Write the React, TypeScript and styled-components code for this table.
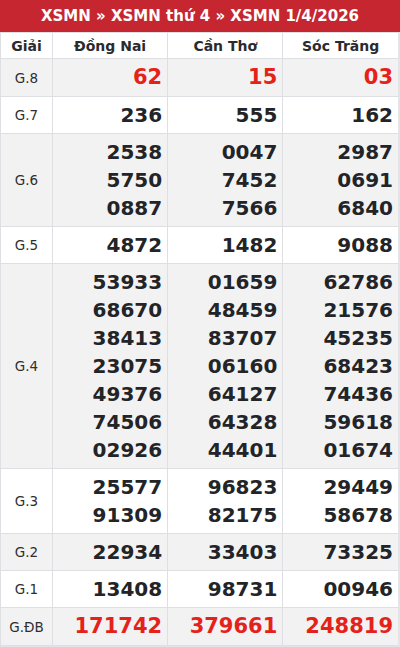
import { ReactElement } from 'react';
import styled, { createGlobalStyle } from 'styled-components';

const GlobalStyle = createGlobalStyle`
  html, body {
    margin: 0;
    padding: 0;
    background: #fff;
    font-family: 'DejaVu Sans', 'Liberation Sans', sans-serif;
  }
`;

const Wrapper = styled.div`
  width: 400px;
  box-sizing: border-box;
  border-left: 1px solid #dedfe2;
  border-right: 2px solid #e3e4e7;
  border-bottom: 2px solid #e3e4e7;
`;

const Title = styled.div`
  height: 32px;
  background: #c6262f;
  color: #fff;
  font-size: 15px;
  font-weight: bold;
  display: flex;
  align-items: center;
  justify-content: center;
  margin-left: -1px;
  margin-right: -2px;
`;

const Table = styled.table`
  width: 100%;
  border-collapse: collapse;
  table-layout: fixed;
`;

const HeadCell = styled.th<{ $first?: boolean }>`
  height: 25px;
  padding: 0;
  font-size: 14px;
  font-weight: bold;
  color: #2b2b2e;
  text-align: center;
  border-top: 1px solid #dedfe2;
  border-bottom: 1px solid #dedfe2;
  border-left: ${(p) => (p.$first ? 'none' : '1px solid #dedfe2')};
  width: ${(p) => (p.$first ? '51px' : 'auto')};
`;

const Row = styled.tr<{ $alt: boolean }>`
  background: ${(p) => (p.$alt ? '#f2f2f3' : '#fff')};
`;

const PrizeCell = styled.td`
  padding: 0;
  font-size: 13.5px;
  color: #2e2e30;
  text-align: center;
  border-bottom: 1px solid #dedfe2;
`;

const NumCell = styled.td`
  padding: 4px 5px 4px 0;
  text-align: right;
  vertical-align: middle;
  border-left: 1px solid #dedfe2;
  border-bottom: 1px solid #dedfe2;
`;

const Num = styled.div<{ $red: boolean }>`
  font-size: ${(p) => (p.$red ? '21px' : '20px')};
  font-weight: bold;
  line-height: ${(p) => (p.$red ? '29px' : '28px')};
  color: ${(p) => (p.$red ? '#e5221a' : '#222428')};
`;

const provinces = ['Đồng Nai', 'Cần Thơ', 'Sóc Trăng'];

const rows: { prize: string; red?: boolean; values: string[][] }[] = [
  { prize: 'G.8', red: true, values: [['62'], ['15'], ['03']] },
  { prize: 'G.7', values: [['236'], ['555'], ['162']] },
  {
    prize: 'G.6',
    values: [
      ['2538', '5750', '0887'],
      ['0047', '7452', '7566'],
      ['2987', '0691', '6840'],
    ],
  },
  { prize: 'G.5', values: [['4872'], ['1482'], ['9088']] },
  {
    prize: 'G.4',
    values: [
      ['53933', '68670', '38413', '23075', '49376', '74506', '02926'],
      ['01659', '48459', '83707', '06160', '64127', '64328', '44401'],
      ['62786', '21576', '45235', '68423', '74436', '59618', '01674'],
    ],
  },
  {
    prize: 'G.3',
    values: [
      ['25577', '91309'],
      ['96823', '82175'],
      ['29449', '58678'],
    ],
  },
  { prize: 'G.2', values: [['22934'], ['33403'], ['73325']] },
  { prize: 'G.1', values: [['13408'], ['98731'], ['00946']] },
  { prize: 'G.ĐB', red: true, values: [['171742'], ['379661'], ['248819']] },
];

const App = (): ReactElement => {
  return (
    <>
      <GlobalStyle />
      <Wrapper>
        <Title>XSMN » XSMN thứ 4 » XSMN 1/4/2026</Title>
        <Table>
          <thead>
            <tr>
              <HeadCell $first>Giải</HeadCell>
              {provinces.map((p) => (
                <HeadCell key={p}>{p}</HeadCell>
              ))}
            </tr>
          </thead>
          <tbody>
            {rows.map((row, i) => (
              <Row key={row.prize} $alt={i % 2 === 0}>
                <PrizeCell>{row.prize}</PrizeCell>
                {row.values.map((nums, j) => (
                  <NumCell key={j}>
                    {nums.map((n, k) => (
                      <Num key={k} $red={!!row.red}>
                        {n}
                      </Num>
                    ))}
                  </NumCell>
                ))}
              </Row>
            ))}
          </tbody>
        </Table>
      </Wrapper>
    </>
  );
};

export default App;
